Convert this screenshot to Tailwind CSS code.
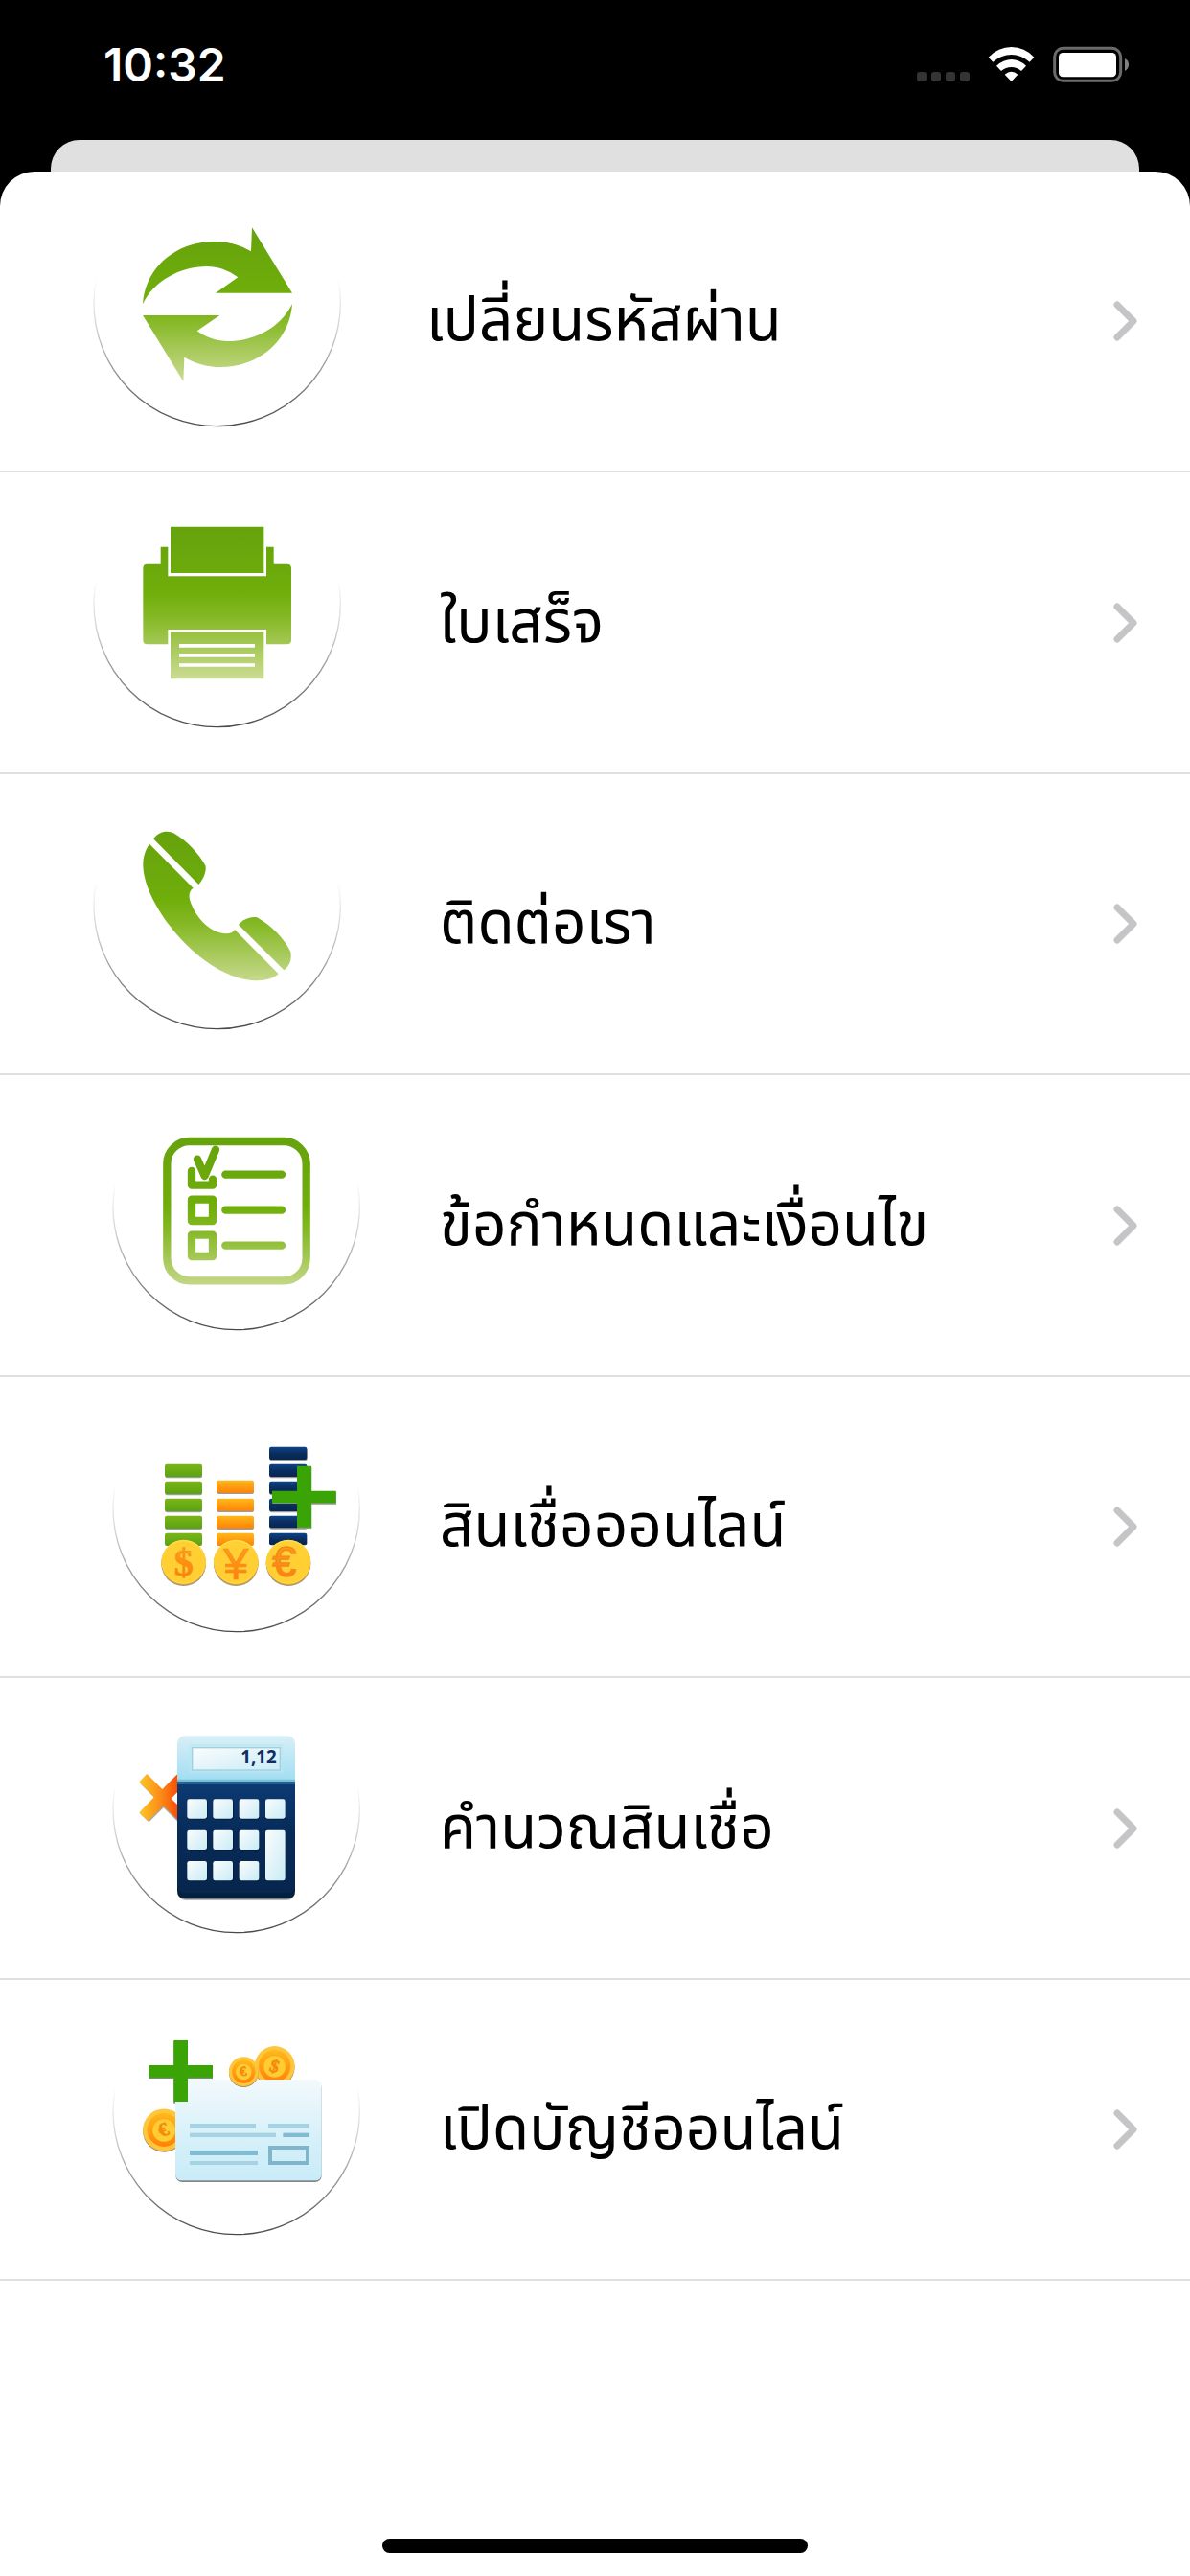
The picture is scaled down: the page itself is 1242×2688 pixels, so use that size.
<!DOCTYPE html>
<html lang="th">
<head>
    <meta charset="UTF-8" />
    <meta name="viewport" content="width=device-width, initial-scale=1" />
    <title>เมนู</title>
    <script src="https://cdn.jsdelivr.net/npm/@tailwindcss/browser@4"></script>
</head>
<body class="bg-black font-['Inter','Noto_Sans_Thai','Noto_Sans','Liberation_Sans',sans-serif] flex flex-col min-h-screen text-black">
    <!-- Shared gradients and the chevron -->
    <svg class="absolute size-0" aria-hidden="true">
        <defs>
            <linearGradient id="ring" x1="0" y1="0" x2="0" y2="1">
                <stop offset="0.4" stop-color="#4a4a4a" stop-opacity="0" />
                <stop offset="0.6" stop-color="#4a4a4a" stop-opacity="0.25" />
                <stop offset="1" stop-color="#4a4a4a" />
            </linearGradient>
            <linearGradient id="green" gradientUnits="userSpaceOnUse" x1="0" y1="82" x2="0" y2="564">
                <stop offset="0" stop-color="#65a20d" />
                <stop offset="0.45" stop-color="#70ae0b" />
                <stop offset="0.6" stop-color="#84b824" />
                <stop offset="1" stop-color="#cbdb92" />
            </linearGradient>
            <linearGradient id="barGreen" x1="0" y1="0" x2="0" y2="1">
                <stop stop-color="#7cb518" /><stop offset="1" stop-color="#5aa312" />
            </linearGradient>
            <linearGradient id="barOrange" x1="0" y1="0" x2="0" y2="1">
                <stop stop-color="#ffb91a" /><stop offset="1" stop-color="#ff8208" />
            </linearGradient>
            <linearGradient id="barNavy" x1="0" y1="0" x2="0" y2="1">
                <stop stop-color="#0d4488" /><stop offset="0.5" stop-color="#0a2e61" /><stop offset="1" stop-color="#072650" />
            </linearGradient>
            <linearGradient id="coinSign" x1="0" y1="0" x2="0" y2="1">
                <stop stop-color="#ffa51e" /><stop offset="1" stop-color="#ff7a05" />
            </linearGradient>
            <linearGradient id="cross" gradientUnits="userSpaceOnUse" x1="166" y1="0" x2="290" y2="0">
                <stop stop-color="#fbc926" /><stop offset="0.55" stop-color="#fb8a18" /><stop offset="1" stop-color="#f94a04" />
            </linearGradient>
            <linearGradient id="screen" x1="0" y1="0" x2="0" y2="1">
                <stop stop-color="#d8eff7" /><stop offset="1" stop-color="#a0ddf2" />
            </linearGradient>
            <linearGradient id="key" x1="0" y1="0" x2="1" y2="1">
                <stop stop-color="#fbfcfd" /><stop offset="1" stop-color="#c9ecf6" />
            </linearGradient>
            <linearGradient id="pad" x1="0" y1="0" x2="0" y2="1">
                <stop stop-color="#0d3b75" /><stop offset="0.5" stop-color="#072a56" /><stop offset="1" stop-color="#07264e" />
            </linearGradient>
            <linearGradient id="card" x1="0" y1="0" x2="0" y2="1">
                <stop stop-color="#f3f9fc" /><stop offset="0.6" stop-color="#d5f0f9" /><stop offset="1" stop-color="#c9ecf8" />
            </linearGradient>
        </defs>
        <symbol id="chevron" viewBox="0 0 26 42">
            <path d="M4 4 L21 21 L4 38" fill="none" stroke="#c5c5c7" stroke-width="7" stroke-linecap="round" stroke-linejoin="round" />
        </symbol>
        <symbol id="coin" viewBox="-50 -50 100 104">
            <circle cy="3" r="49" fill="#a58c5c" />
            <circle r="49" fill="#ffc63b" />
            <circle r="39" fill="url(#barOrange)" />
            <circle r="28" fill="#ffa91c" />
            <circle cy="1" r="26" fill="#ffcd33" />
        </symbol>
    </svg>

    <!-- Status bar -->
    <header class="h-[146px] flex items-start justify-between pl-[108px] pr-16 pt-12 text-white">
        <span class="text-[48px] leading-[40px] font-semibold">10:32</span>
        <svg class="w-[221px] h-[38px]" viewBox="51 54 663 114" aria-hidden="true">
            <g fill="#343434">
                <rect x="51" y="135" width="30" height="30" rx="9" />
                <rect x="96" y="135" width="30" height="30" rx="9" />
                <rect x="141" y="135" width="30" height="30" rx="9" />
                <rect x="186" y="135" width="30" height="30" rx="9" />
            </g>
            <g fill="#fff">
                <path d="M275 89 Q306 57 347 57 Q388 57 418 89 L404 104 Q378 81 347 81 Q315 81 289 104 Z" />
                <path d="M300 116 Q322 96 347 96 Q372 96 393 116 L378 132 Q364 120 347 120 Q329 120 315 132 Z" />
                <path d="M326 143 Q347 125 367 143 L347 165 Z" />
                <rect x="495" y="75" width="180" height="76" rx="13" />
            </g>
            <rect x="482" y="61" width="207" height="102" rx="27" fill="none" stroke="#6b6b6b" stroke-width="9" />
            <path d="M702 93 Q714 99 714 112 Q714 126 702 132 Z" fill="#808080" />
        </svg>
    </header>
    <div class="h-[33px] mx-[53px] rounded-t-[30px] bg-[#e0e0e0]"></div>

    <!-- Menu sheet -->
    <main class="grow flex flex-col bg-white rounded-t-[36px]">
        <ul class="text-[62px] leading-[80px]">
            <li class="h-[314px] border-b-2 border-[#e0e0e0]">
                <a href="#" class="flex h-full items-center pl-[95px] pr-[54px]">
                    <svg class="size-[264px] mt-[5px] mr-[86px] self-start shrink-0" viewBox="45 -78 792 792" aria-hidden="true">
                        <circle cx="440" cy="318" r="386" fill="none" stroke="url(#ring)" stroke-width="4" />
                        <path fill="url(#green)" d="M207 322 C215 205 312 126 432 126 C475 126 515 138 546 157 L549 82 L675 287 L435 287 L505 238 C475 215 440 204 408 204 C325 204 240 250 207 322 Z M675 321 C667 438 570 519 450 519 C408 519 368 507 337 488 L334 564 L207 357 L448 357 L377 406 C407 428 440 438 474 438 C557 438 640 394 675 321 Z" />
                    </svg>
                    <span class="grow pb-1">เปลี่ยนรหัสผ่าน</span>
                    <svg class="w-[26px] h-[42px] shrink-0" aria-hidden="true"><use href="#chevron" /></svg>
                </a>
            </li>
            <li class="h-[315px] border-b-2 border-[#e0e0e0]">
                <a href="#" class="flex h-full items-center pl-[95px] pr-[54px]">
                    <svg class="size-[264px] mt-[5px] mr-[100px] self-start shrink-0" viewBox="45 -65 792 792" aria-hidden="true">
                        <circle cx="440" cy="331" r="386" fill="none" stroke="url(#ring)" stroke-width="4" />
                        <g fill="url(#green)">
                            <path d="M294 90 H586 V235 H294 Z" />
                            <path d="M263 153 H286 V245 H594 V153 H617 V207 H659 Q672 207 672 220 V445 Q672 458 659 458 H594 V412 H286 V458 H221 Q208 458 208 445 V220 Q208 207 221 207 H263 Z" />
                            <path fill-rule="evenodd" d="M294 420 H586 V566 H294 Z M321 457 V468 H558 V457 Z M321 487 V498 H558 V487 Z M321 518 V528 H558 V518 Z" />
                        </g>
                    </svg>
                    <span class="grow pb-1">ใบเสร็จ</span>
                    <svg class="w-[26px] h-[42px] shrink-0" aria-hidden="true"><use href="#chevron" /></svg>
                </a>
            </li>
            <li class="h-[314px] border-b-2 border-[#e0e0e0]">
                <a href="#" class="flex h-full items-center pl-[95px] pr-[54px]">
                    <svg class="size-[264px] mt-[5px] mr-[100px] self-start shrink-0" viewBox="45 -80 792 792" aria-hidden="true">
                        <circle cx="440" cy="316" r="386" fill="none" stroke="url(#ring)" stroke-width="4" />
                        <g fill="url(#green)">
                            <path d="M240 107 C256 84 284 78 306 90 C346 114 382 152 403 191 C408 206 397 234 382 250 Z" />
                            <path d="M228 123 L365 261 C350 270 350 290 358 309 C375 352 406 388 448 401 C470 407 488 404 495 391 L632 530 C604 553 568 554 527 547 C440 529 355 462 292 380 C241 312 208 244 208 186 C208 162 216 140 228 123 Z" />
                            <path d="M507 376 C522 358 545 349 565 353 C610 378 650 420 670 461 C674 484 668 503 649 518 Z" />
                        </g>
                    </svg>
                    <span class="grow pb-1">ติดต่อเรา</span>
                    <svg class="w-[26px] h-[42px] shrink-0" aria-hidden="true"><use href="#chevron" /></svg>
                </a>
            </li>
            <li class="h-[315px] border-b-2 border-[#e0e0e0]">
                <a href="#" class="flex h-full items-center pl-[115px] pr-[54px]">
                    <svg class="size-[264px] mt-[5px] mr-20 self-start shrink-0" viewBox="75 -98 792 792" aria-hidden="true">
                        <circle cx="470" cy="298" r="386" fill="none" stroke="url(#ring)" stroke-width="4" />
                        <g fill="none" stroke="url(#green)" stroke-width="25" stroke-linecap="round" stroke-linejoin="round">
                            <rect x="253" y="94" width="436" height="436" rx="70" />
                            <path d="M330 187 V231 H396 V213" />
                            <path d="M348 150 L371 202 L405 120" />
                            <rect x="330" y="276" width="66" height="67" />
                            <rect x="330" y="387" width="66" height="67" />
                            <path d="M436 198 H612 M436 309 H612 M436 420 H612" />
                        </g>
                    </svg>
                    <span class="grow pb-1">ข้อกำหนดและเงื่อนไข</span>
                    <svg class="w-[26px] h-[42px] shrink-0" aria-hidden="true"><use href="#chevron" /></svg>
                </a>
            </li>
            <li class="h-[314px] border-b-2 border-[#e0e0e0]">
                <a href="#" class="flex h-full items-center pl-[115px] pr-[54px]">
                    <svg class="size-[264px] mt-[5px] mr-20 self-start shrink-0" viewBox="75 -113 792 792" aria-hidden="true">
                        <circle cx="470" cy="283" r="386" fill="none" stroke="url(#ring)" stroke-width="4" />
                        <!-- bar shadows -->
                        <g fill="#9b9b9b">
                            <rect x="247" y="148" width="116" height="40" rx="6" /><rect x="247" y="202" width="116" height="40" rx="6" /><rect x="247" y="256" width="116" height="40" rx="6" /><rect x="247" y="310" width="116" height="40" rx="6" />
                            <rect x="409" y="199" width="116" height="39" rx="6" /><rect x="409" y="256" width="116" height="39" rx="6" /><rect x="409" y="310" width="116" height="39" rx="6" />
                            <rect x="574" y="94" width="118" height="40" rx="6" /><rect x="574" y="148" width="118" height="40" rx="6" /><rect x="574" y="202" width="118" height="40" rx="6" /><rect x="574" y="256" width="118" height="40" rx="6" /><rect x="574" y="310" width="118" height="38" rx="6" />
                        </g>
                        <g fill="url(#barGreen)">
                            <rect x="246" y="144" width="117" height="40" rx="6" /><rect x="246" y="198" width="117" height="40" rx="6" /><rect x="246" y="252" width="117" height="40" rx="6" /><rect x="246" y="306" width="117" height="40" rx="6" /><rect x="246" y="360" width="117" height="40" rx="6" />
                        </g>
                        <g fill="url(#barOrange)">
                            <rect x="408" y="195" width="117" height="39" rx="6" /><rect x="408" y="252" width="117" height="39" rx="6" /><rect x="408" y="306" width="117" height="39" rx="6" /><rect x="408" y="360" width="117" height="40" rx="6" />
                        </g>
                        <g fill="url(#barNavy)">
                            <rect x="573" y="90" width="118" height="40" rx="6" /><rect x="573" y="144" width="118" height="40" rx="6" /><rect x="573" y="198" width="118" height="40" rx="6" /><rect x="573" y="252" width="118" height="40" rx="6" /><rect x="573" y="306" width="118" height="38" rx="6" /><rect x="573" y="360" width="118" height="38" rx="6" />
                        </g>
                        <path d="M661 154 H706 V232 H783 V270 H706 V346 H661 V268 H583 V232 H661 Z" fill="#8d9b84" />
                        <path d="M660 150 H705 V228 H782 V266 H705 V342 H660 V266 H582 V228 H660 Z" fill="#3aa306" />
                        <g fill="#9c9686"><circle cx="305" cy="456" r="70" /><circle cx="469" cy="456" r="70" /><circle cx="633" cy="456" r="70" /></g>
                        <g fill="#f3ab24"><circle cx="305" cy="452" r="70" /><circle cx="469" cy="452" r="70" /><circle cx="633" cy="452" r="70" /></g>
                        <g fill="#ffe048"><circle cx="305" cy="450" r="69" /><circle cx="469" cy="450" r="69" /><circle cx="633" cy="450" r="69" /></g>
                        <g fill="#ffcf33"><ellipse cx="305" cy="451" rx="69" ry="65" /><ellipse cx="469" cy="451" rx="69" ry="65" /><ellipse cx="633" cy="451" rx="69" ry="65" /></g>
                        <g fill="url(#coinSign)" stroke="#f48a1c" stroke-width="2" text-anchor="middle">
                            <text x="305" y="492" class="font-['Liberation_Serif',serif] font-bold text-[120px]">$</text>
                            <text x="469" y="504" class="font-['Liberation_Sans',sans-serif] text-[140px]">¥</text>
                            <text x="620" y="496" stroke-width="5" class="font-['Liberation_Sans',sans-serif] text-[132px]">€</text>
                        </g>
                    </svg>
                    <span class="grow pb-1">สินเชื่อออนไลน์</span>
                    <svg class="w-[26px] h-[42px] shrink-0" aria-hidden="true"><use href="#chevron" /></svg>
                </a>
            </li>
            <li class="h-[315px] border-b-2 border-[#e0e0e0]">
                <a href="#" class="flex h-full items-center pl-[115px] pr-[54px]">
                    <svg class="size-[264px] mt-[5px] mr-20 self-start shrink-0" viewBox="75 -100 792 792" aria-hidden="true">
                        <circle cx="470" cy="296" r="386" fill="none" stroke="url(#ring)" stroke-width="4" />
                        <path d="M168 214 L213 259 L168 309 L196 336 L242 291 L290 338 V192 L240 238 Z" fill="#a8a8a0" />
                        <path d="M190 185 L238 233 L286 185 V242 L266 262 L286 281 V328 L242 285 L193 333 L166 306 L212 258 L166 210 Z" fill="url(#cross)" />
                        <path d="M288 240 L266 262 L288 283 Z" fill="#fff" />
                        <rect x="286" y="70" width="368" height="510" rx="26" fill="#a9a79e" />
                        <path d="M285 205 H654 V550 Q654 576 628 576 H311 Q285 576 285 550 Z" fill="#04203f" />
                        <path d="M285 205 H654 V532 Q654 558 628 558 H311 Q285 558 285 532 Z" fill="url(#pad)" />
                        <path d="M285 209 V92 Q285 66 311 66 H628 Q654 66 654 92 V209 Z" fill="url(#screen)" />
                        <path d="M285 202 H654 V209 H285 Z" fill="#7cbfd5" />
                        <path d="M285 209 H654 V218 H285 Z" fill="#246293" />
                        <rect x="322" y="92" width="294" height="90" fill="#bde6f2" opacity="0.6" />
                        <rect x="332" y="103" width="275" height="70" fill="url(#key)" stroke="#9fd0dd" stroke-width="4" />
                        <text x="596" y="153" text-anchor="end" fill="#0b2e66" class="font-['Noto_Sans',sans-serif] font-bold text-[56px]">1,12</text>
                        <g fill="#041d3d">
                            <rect x="318" y="267" width="63" height="61" rx="7" /><rect x="399" y="267" width="63" height="61" rx="7" /><rect x="480" y="267" width="63" height="61" rx="7" /><rect x="562" y="267" width="63" height="61" rx="7" />
                            <rect x="318" y="364" width="63" height="61" rx="7" /><rect x="399" y="364" width="63" height="61" rx="7" /><rect x="480" y="364" width="63" height="61" rx="7" /><rect x="562" y="364" width="63" height="158" rx="7" />
                            <rect x="318" y="461" width="63" height="61" rx="7" /><rect x="399" y="461" width="63" height="61" rx="7" /><rect x="480" y="461" width="63" height="61" rx="7" />
                        </g>
                        <g fill="url(#key)">
                            <rect x="316" y="264" width="62" height="61" rx="7" /><rect x="397" y="264" width="62" height="61" rx="7" /><rect x="479" y="264" width="62" height="61" rx="7" /><rect x="561" y="264" width="62" height="61" rx="7" />
                            <rect x="316" y="361" width="62" height="61" rx="7" /><rect x="397" y="361" width="62" height="61" rx="7" /><rect x="479" y="361" width="62" height="61" rx="7" /><rect x="561" y="361" width="62" height="158" rx="7" />
                            <rect x="316" y="458" width="62" height="61" rx="7" /><rect x="397" y="458" width="62" height="61" rx="7" /><rect x="479" y="458" width="62" height="61" rx="7" />
                        </g>
                    </svg>
                    <span class="grow pb-1">คำนวณสินเชื่อ</span>
                    <svg class="w-[26px] h-[42px] shrink-0" aria-hidden="true"><use href="#chevron" /></svg>
                </a>
            </li>
            <li class="h-[314px] border-b-2 border-[#e0e0e0]">
                <a href="#" class="flex h-full items-center pl-[115px] pr-[54px]">
                    <svg class="size-[264px] mt-[5px] mr-20 self-start shrink-0" viewBox="75 -87 792 792" aria-hidden="true">
                        <circle cx="470" cy="309" r="386" fill="none" stroke="url(#ring)" stroke-width="4" />
                        <use href="#coin" x="176" y="300" width="135" height="140" />
                        <use href="#coin" x="526" y="104" width="128" height="133" />
                        <rect x="280" y="214" width="457" height="317" rx="20" fill="#85888a" />
                        <rect x="279" y="210" width="458" height="316" rx="20" fill="url(#card)" />
                        <use href="#coin" x="446" y="138" width="94" height="98" />
                        <g fill="#f58a0c" stroke="#f58a0c" stroke-width="2" text-anchor="middle" class="font-['Liberation_Serif',serif] font-bold">
                            <text x="241" y="387" transform="rotate(-20 241 367)" class="text-[60px]">€</text>
                            <text x="590" y="187" transform="rotate(18 590 168)" class="text-[56px]">$</text>
                            <text x="491" y="198" transform="rotate(-8 491 184)" class="text-[42px]">€</text>
                        </g>
                        <path d="M274 90 H318 V168 H396 V207 H279 V284 H274 Z" fill="#7a8f6e" />
                        <path d="M196 168 H274 V207 H196 Z" fill="#7a8f6e" />
                        <path d="M274 87 H318 V165 H396 V203 H318 V279 H274 V203 H196 V165 H274 Z" fill="#3aa306" />
                        <path d="M318 207 H396 V230 H318 Z" fill="#eff8fb" />
                        <g fill="#a6d3e4">
                            <rect x="324" y="348" width="207" height="14" />
                            <rect x="570" y="348" width="128" height="14" />
                            <rect x="324" y="377" width="270" height="13" />
                            <rect x="324" y="465" width="213" height="12" />
                        </g>
                        <g fill="#82bcd3">
                            <rect x="616" y="377" width="82" height="13" />
                            <rect x="324" y="432" width="213" height="15" />
                        </g>
                        <rect x="576" y="423" width="117" height="48" fill="none" stroke="#7fb6cc" stroke-width="12" />
                    </svg>
                    <span class="grow pb-1">เปิดบัญชีออนไลน์</span>
                    <svg class="w-[26px] h-[42px] shrink-0" aria-hidden="true"><use href="#chevron" /></svg>
                </a>
            </li>
        </ul>
        <!-- Home indicator -->
        <div class="mt-auto mb-6 mx-auto w-[444px] h-[15px] rounded-full bg-black"></div>
    </main>
</body>
</html>
